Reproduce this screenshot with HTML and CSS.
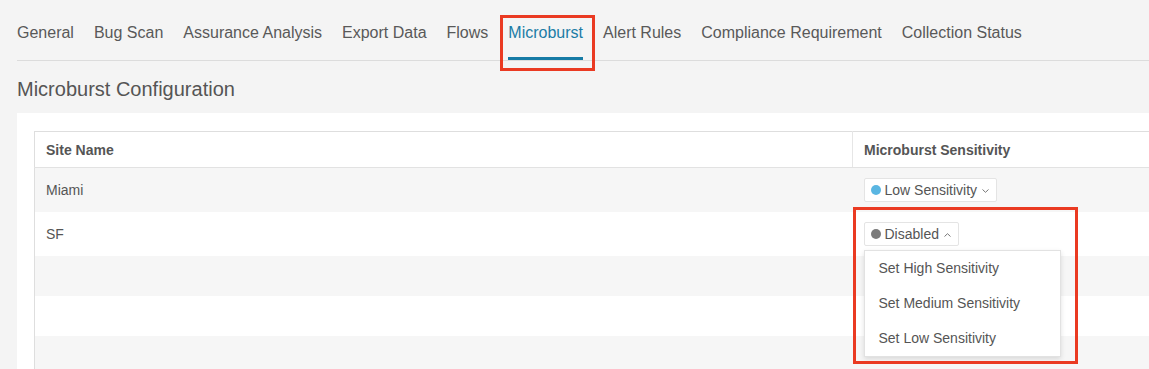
FILE: index.html
```html
<!DOCTYPE html>
<html lang="en">
<head>
    <meta charset="UTF-8">
    <meta name="viewport" content="width=device-width, initial-scale=1.0">
    <title>Microburst Configuration</title>
    <link rel="stylesheet" href="styles.css">
</head>
<body>
    <nav class="tabs">
        <a class="tab">General</a>
        <a class="tab">Bug Scan</a>
        <a class="tab">Assurance Analysis</a>
        <a class="tab">Export Data</a>
        <a class="tab">Flows</a>
        <a class="tab active">Microburst</a>
        <a class="tab">Alert Rules</a>
        <a class="tab">Compliance Requirement</a>
        <a class="tab">Collection Status</a>
    </nav>

    <h2 class="title">Microburst Configuration</h2>

    <div class="panel">
        <table class="sites">
            <colgroup>
                <col class="col-site">
                <col class="col-sens">
            </colgroup>
            <thead>
                <tr>
                    <th>Site Name</th>
                    <th class="divider">Microburst Sensitivity</th>
                </tr>
            </thead>
            <tbody>
                <tr>
                    <td>Miami</td>
                    <td>
                        <button class="select">
                            <span class="dot low"></span>
                            Low Sensitivity
                            <svg class="chevron" width="7" height="4" viewBox="0 0 7 4"><polyline points="0.5,0.5 3.5,3.3 6.5,0.5" fill="none" stroke="#777" stroke-width="1"/></svg>
                        </button>
                    </td>
                </tr>
                <tr>
                    <td>SF</td>
                    <td>
                        <div class="select-wrap">
                            <button class="select">
                                <span class="dot off"></span>
                                Disabled
                                <svg class="chevron" width="7" height="4" viewBox="0 0 7 4"><polyline points="0.5,3.5 3.5,0.7 6.5,3.5" fill="none" stroke="#777" stroke-width="1"/></svg>
                            </button>
                            <ul class="menu">
                                <li>Set High Sensitivity</li>
                                <li>Set Medium Sensitivity</li>
                                <li>Set Low Sensitivity</li>
                            </ul>
                        </div>
                    </td>
                </tr>
                <tr><td></td><td></td></tr>
                <tr><td></td><td></td></tr>
                <tr><td></td><td></td></tr>
            </tbody>
        </table>
    </div>

    <!-- annotation boxes from the screenshot -->
    <div class="mark mark-tab"></div>
    <div class="mark mark-menu"></div>
</body>
</html>
```

FILE: styles.css
```css
body {
    margin: 0;
    background-color: #f4f4f4;
    font-family: "Liberation Sans", Arial, sans-serif;
    color: #555;
    overflow: hidden;
}
.tabs {
    display: flex;
    gap: 20px;
    margin-left: 17px;
    border-bottom: 1px solid #dcdcdc;
}
.tab {
    padding: 23px 0 14px;
    font-size: 16px;
    line-height: 20px;
    color: #595959;
    border-bottom: 3px solid transparent;
    white-space: nowrap;
}
.tab.active {
    color: #1b7ca6;
    border-bottom-color: #167ba5;
}
.title {
    margin: 16px 0 12px 17px;
    font-size: 20px;
    line-height: 24px;
    font-weight: normal;
    color: #555;
}
.panel {
    margin-left: 17px;
    padding: 18px 0 0 17px;
    background-color: #fff;
    height: calc(100vh - 131px);
    overflow: hidden;
}
.sites {
    width: 100%;
    table-layout: fixed;
    border-collapse: collapse;
    border-top: 1px solid #dedede;
    border-left: 1px solid #dedede;
    font-size: 14px;
    line-height: 20px;
}
.col-site {
    width: 818px;
}
.sites th {
    text-align: left;
    font-weight: bold;
    color: #555;
    padding: 8px 11px 7px;
    border-bottom: 1px solid #e2e2e2;
    white-space: nowrap;
}
.sites th.divider {
    border-left: 1px solid #e6e6e6;
}
.sites td {
    padding: 10px 11px;
    height: 20px;
    vertical-align: middle;
    color: #555;
}
.sites tbody tr:nth-child(odd) {
    background-color: #f6f6f6;
}
.select-wrap {
    position: relative;
    display: inline-block;
}
.select {
    display: inline-flex;
    align-items: center;
    height: 24px;
    padding: 0 7px 0 6px;
    border: 1px solid #e4e4e4;
    border-radius: 2px;
    background-color: #fff;
    font-family: inherit;
    font-size: 14px;
    line-height: 20px;
    color: #555;
    vertical-align: middle;
}
.dot {
    width: 10px;
    height: 10px;
    border-radius: 50%;
    margin-right: 4px;
}
.dot.low {
    background-color: #5ab6e2;
}
.dot.off {
    background-color: #7b7b7b;
}
.chevron {
    margin-left: 5px;
    margin-top: 2px;
}
.menu {
    position: absolute;
    top: 28px;
    left: 0;
    width: 195px;
    margin: 0;
    padding: 0;
    list-style: none;
    background-color: #fff;
    border: 1px solid #e2e2e2;
    box-shadow: 0 2px 5px rgba(0, 0, 0, 0.12);
    z-index: 2;
}
.menu li {
    padding-left: 14px;
    line-height: 35px;
    font-size: 14px;
    color: #555;
    white-space: nowrap;
}
.mark {
    position: absolute;
    border: 3px solid #ea3a22;
    box-sizing: border-box;
    z-index: 3;
}
.mark-tab {
    left: 500px;
    top: 15px;
    width: 95px;
    height: 56px;
}
.mark-menu {
    left: 853px;
    top: 207px;
    width: 225px;
    height: 157px;
}
```
